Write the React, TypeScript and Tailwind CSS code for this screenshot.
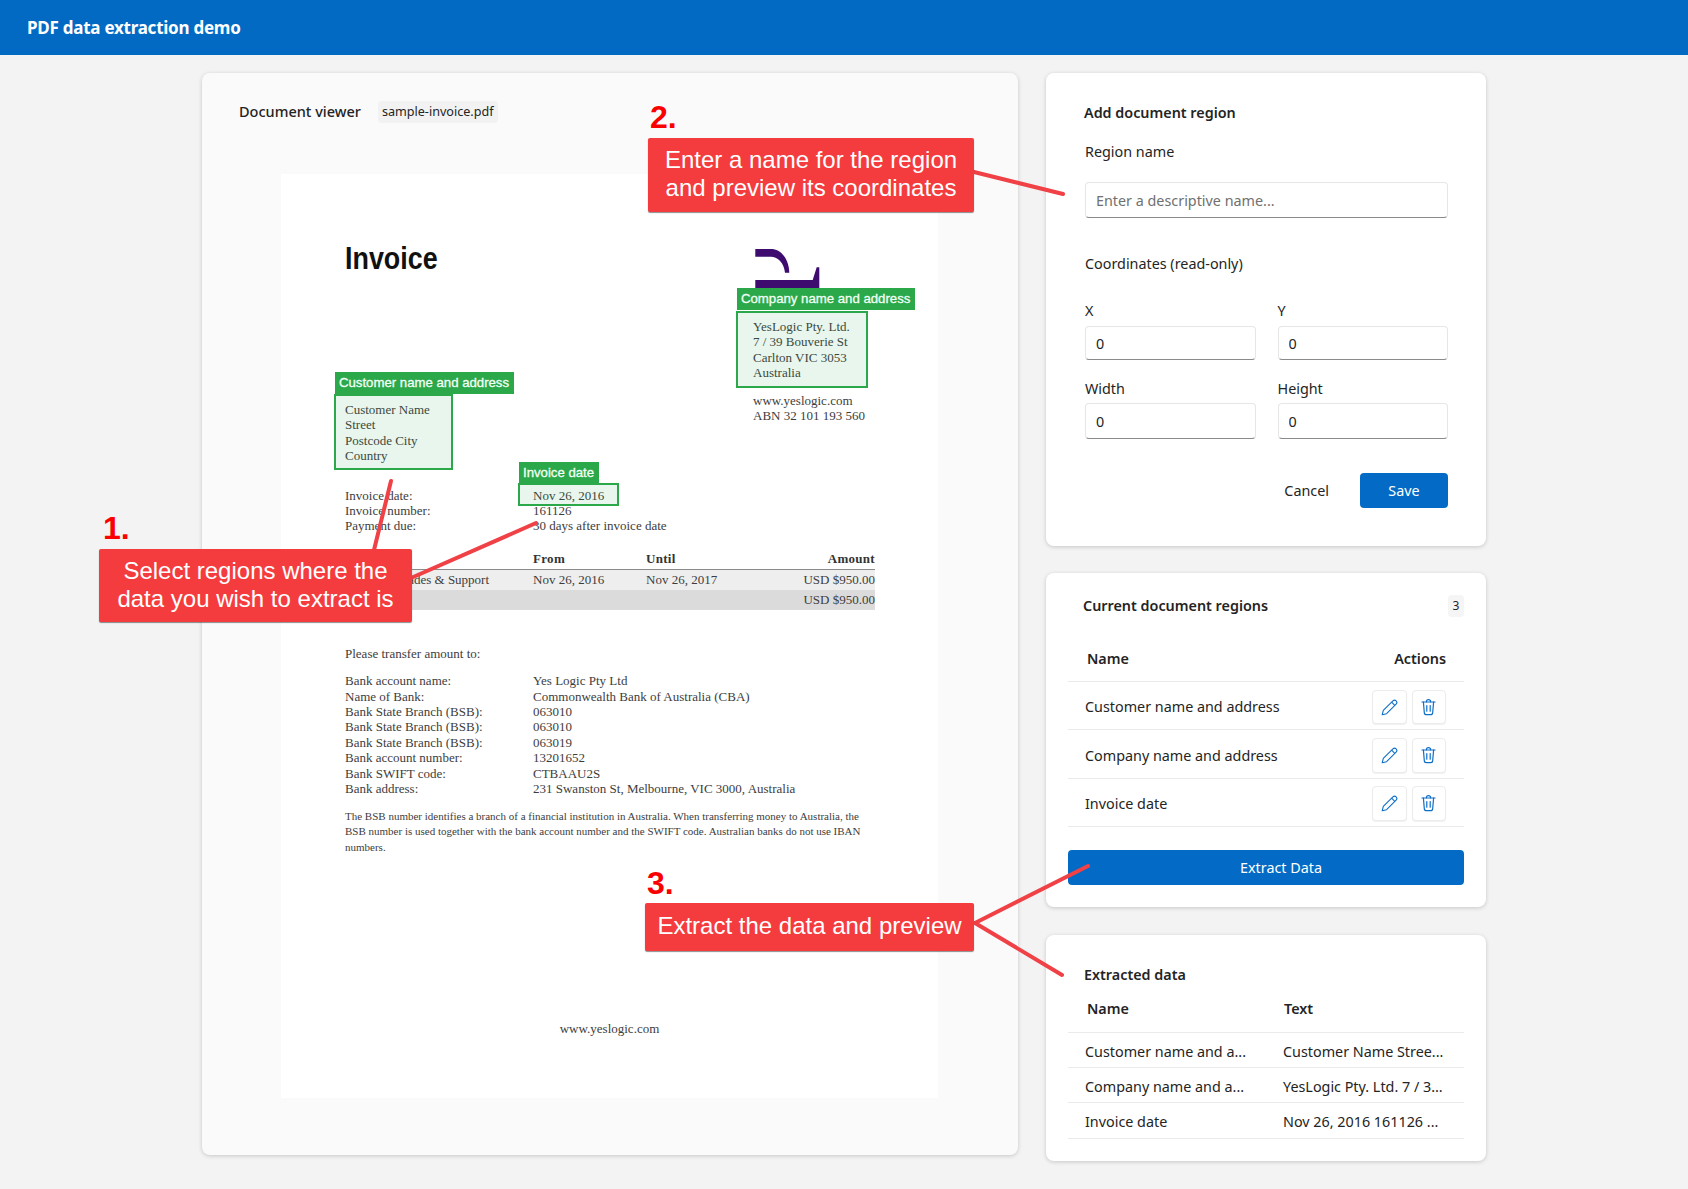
const serif = "font-['Liberation_Serif',serif]";

const bankRows = [
  ['Bank account name:', 'Yes Logic Pty Ltd'],
  ['Name of Bank:', 'Commonwealth Bank of Australia (CBA)'],
  ['Bank State Branch (BSB):', '063010'],
  ['Bank State Branch (BSB):', '063010'],
  ['Bank State Branch (BSB):', '063019'],
  ['Bank account number:', '13201652'],
  ['Bank SWIFT code:', 'CTBAAU2S'],
  ['Bank address:', '231 Swanston St, Melbourne, VIC 3000, Australia'],
];

const regions = ['Customer name and address', 'Company name and address', 'Invoice date'];

const extracted = [
  ['Customer name and a...', 'Customer Name Stree...'],
  ['Company name and a...', 'YesLogic Pty. Ltd. 7 / 3...'],
  ['Invoice date', 'Nov 26, 2016 161126 ...'],
];

function EditIcon() {
  return (
    <svg width="17" height="17" viewBox="0 0 17 17" fill="none" stroke="#0f6fc6" strokeWidth="1.1" strokeLinejoin="round">
      <path d="M1.2 15.8 L2.3 11.4 L11.9 1.9 A2.2 2.2 0 0 1 15.1 5.1 L5.6 14.7 Z" />
      <path d="M10.6 3.2 L13.8 6.4" />
    </svg>
  );
}

function TrashIcon() {
  return (
    <svg width="15" height="17" viewBox="0 0 15 17" fill="none" stroke="#0f6fc6" strokeWidth="1.2" strokeLinecap="round">
      <path d="M5.4 2.8 A2.1 2.1 0 0 1 9.6 2.8" />
      <path d="M1 3 H14" />
      <path d="M2.4 3 L3.3 13.6 A2.3 2.3 0 0 0 5.6 15.7 H9.4 A2.3 2.3 0 0 0 11.7 13.6 L12.6 3" />
      <path d="M5.8 6.6 V12.2 M9.2 6.6 V12.2" />
    </svg>
  );
}

function Region({ label, className, boxClassName }: { label: string; className: string; boxClassName: string }) {
  return (
    <>
      <div className={`absolute h-[22px] bg-[#2aa84a] px-1 text-[13.2px] leading-[22px] whitespace-nowrap text-[#f2fff5] [-webkit-text-stroke:0.3px_#f2fff5] font-['Liberation_Sans',sans-serif] ${className}`}>
        {label}
      </div>
      <div className={`absolute border-2 border-[#2aa84a] bg-[#2aa84a]/10 ${boxClassName}`}></div>
    </>
  );
}

function Field({ label, value, className }: { label: string; value: string; className: string }) {
  return (
    <div>
      <div className="h-5 leading-[19px]">{label}</div>
      <input
        readOnly
        value={value}
        className={`w-full rounded border border-[#e6e6e6] border-b-[#8a8a8a] bg-white px-[10px] outline-none ${className}`}
      />
    </div>
  );
}

function Callout({ num, text, className, numClassName }: { num: string; text: React.ReactNode; className: string; numClassName: string }) {
  return (
    <>
      <div className={`absolute text-[32px] leading-9 font-bold text-[#fa0000] font-['Liberation_Sans',sans-serif] ${numClassName}`}>{num}</div>
      <div className={`absolute flex items-center justify-center rounded-[2px] bg-[#f43c3f] pb-[2px] text-center text-[24px] leading-[28px] text-white shadow-[0_1px_1px_rgba(0,0,0,0.45)] font-['Liberation_Sans',sans-serif] ${className}`}>
        <div>{text}</div>
      </div>
    </>
  );
}

function InvoicePage() {
  return (
    <div className={`relative h-[924px] w-[657px] bg-white pt-[62px] text-[13px] leading-[15.4px] text-[#3d3d3d] ${serif}`}>
      <div className="flex pl-[64px]">
        <div className="w-[408px]">
          <div className="h-11 origin-left scale-x-[0.84] text-[32px] leading-[44px] font-bold text-[#111] font-['Liberation_Sans',sans-serif]">Invoice</div>
          <div className="mt-[122px]">
            <div>Customer Name</div>
            <div>Street</div>
            <div>Postcode City</div>
            <div>Country</div>
          </div>
          <div className="mt-[24px] grid grid-cols-[188px_1fr]">
            <div>Invoice date:</div>
            <div>Nov 26, 2016</div>
            <div>Invoice number:</div>
            <div>161126</div>
            <div>Payment due:</div>
            <div>30 days after invoice date</div>
          </div>
        </div>
        <div>
          <svg className="mt-[13px]" width="67" height="40" viewBox="0 0 67 40" fill="#3d0c6e">
            <path d="M2.3 0 H18 C28 0 36 10 36.3 23.7 H32 C31 13 24 7.7 18 7.7 H2.3 Z" />
            <path d="M2.3 31 H59.7 L63.7 18.3 H66.3 V39.3 H2.3 Z" />
          </svg>
          <div className="mt-[30px]">
            <div>YesLogic Pty. Ltd.</div>
            <div>7 / 39 Bouverie St</div>
            <div>Carlton VIC 3053</div>
            <div>Australia</div>
          </div>
          <div className="mt-3">
            <div>www.yeslogic.com</div>
            <div>ABN 32 101 193 560</div>
          </div>
        </div>
      </div>

      <div className="mt-[17px] ml-[64px] w-[530px]">
        <div className="grid h-[19px] grid-cols-[188px_113px_111px_118px] border-b border-[#8a8a8a] font-bold tracking-[0.3px] text-[#333]">
          <div>Description</div>
          <div>From</div>
          <div>Until</div>
          <div className="text-right">Amount</div>
        </div>
        <div className="grid h-5 grid-cols-[188px_113px_111px_118px] items-center bg-[#eeeeee]">
          <div>Prince Upgrades &amp; Support</div>
          <div>Nov 26, 2016</div>
          <div>Nov 26, 2017</div>
          <div className="text-right">USD $950.00</div>
        </div>
        <div className="grid h-5 grid-cols-[412px_118px] items-center bg-[#dbdbdb]">
          <div></div>
          <div className="text-right">USD $950.00</div>
        </div>
      </div>

      <div className="mt-[36px] ml-[64px]">Please transfer amount to:</div>
      <div className="mt-[12px] ml-[64px] grid grid-cols-[188px_1fr]">
        {bankRows.map(([k, v], i) => (
          <div key={i} className="contents">
            <div>{k}</div>
            <div>{v}</div>
          </div>
        ))}
      </div>
      <div className="mt-[12.5px] ml-[64px] text-[11px]">
        <div>The BSB number identifies a branch of a financial institution in Australia. When transferring money to Australia, the</div>
        <div>BSB number is used together with the bank account number and the SWIFT code. Australian banks do not use IBAN</div>
        <div>numbers.</div>
      </div>
      <div className="mt-[166px] text-center">www.yeslogic.com</div>

      <Region label="Customer name and address" className="top-[198px] left-[54px] w-[179px]" boxClassName="top-[220px] left-[53px] h-[76px] w-[119px]" />
      <Region label="Company name and address" className="top-[114px] left-[456px] w-[178px]" boxClassName="top-[137px] left-[455px] h-[77px] w-[132px]" />
      <Region label="Invoice date" className="top-[288px] left-[238px] w-[80px]" boxClassName="top-[309px] left-[237px] h-[23px] w-[101px]" />
    </div>
  );
}

export default function App() {
  return (
    <div className="relative min-h-screen bg-[#f3f3f3] text-[14.35px] text-[#242424] font-['Noto_Sans',sans-serif]">
      <header className="flex h-[55px] items-center bg-[#036ac4] pl-[27px] text-[17px] font-bold tracking-[-0.25px] text-white">
        PDF data extraction demo
      </header>

      <main className="flex gap-[28px] pt-[18px] pl-[202px]">
        <section className="h-[1082px] w-[816px] rounded-lg bg-[#fafafa] shadow-[0_1px_4px_rgba(0,0,0,0.18)]">
          <div className="flex items-center pt-[28px] pl-[37px]">
            <div className="text-[14.5px] font-medium">Document viewer</div>
            <div className="ml-[17px] flex h-[22px] items-center rounded bg-[#f2f2f2] px-1 text-[12.6px]">sample-invoice.pdf</div>
          </div>
          <div className="mt-[51px] ml-[79px]">
            <InvoicePage />
          </div>
        </section>

        <div className="flex w-[440px] flex-col gap-[27px]">
          <section className="rounded-lg bg-white pt-[30px] pr-[38px] pb-[38px] pl-[39px] shadow-[0_1px_4px_rgba(0,0,0,0.18)]">
            <div className="-ml-px h-5 leading-[19px] font-semibold">Add document region</div>
            <div className="mt-[19px] h-5 leading-[19px]">Region name</div>
            <input
              readOnly
              placeholder="Enter a descriptive name..."
              className="mt-5 h-[36px] w-full rounded border border-[#e6e6e6] border-b-[#8a8a8a] bg-white px-[10px] outline-none placeholder:text-[#707070]"
            />
            <div className="mt-9 h-5 leading-[19px]">Coordinates (read-only)</div>
            <div className="mt-[27px] grid grid-cols-2 gap-x-[22px] gap-y-[19px]">
              <Field label="X" value="0" className="mt-[5px] h-[34px]" />
              <Field label="Y" value="0" className="mt-[5px] h-[34px]" />
              <Field label="Width" value="0" className="mt-1 h-9" />
              <Field label="Height" value="0" className="mt-1 h-9" />
            </div>
            <div className="mt-[34px] flex items-center justify-end">
              <button className="mr-[31px]">Cancel</button>
              <button className="h-[35px] w-[88px] rounded bg-[#036bc6] text-white">Save</button>
            </div>
          </section>

          <section className="rounded-lg bg-white px-[22px] pt-[22px] pb-[22px] shadow-[0_1px_4px_rgba(0,0,0,0.18)]">
            <div className="flex items-center justify-between">
              <div className="pl-[15px] font-semibold">Current document regions</div>
              <div className="flex h-[22px] w-4 items-center justify-center rounded bg-[#f5f5f5] text-[12px]">3</div>
            </div>
            <div className="mt-[20px] flex h-[45px] items-center justify-between border-b border-[#ebebeb] pr-[18px] pl-[19px] font-semibold">
              <div>Name</div>
              <div>Actions</div>
            </div>
            {regions.map((name) => (
              <div key={name} className="flex h-[48.3px] items-center justify-between border-b border-[#ebebeb] pt-[3px] pr-[18px] pl-[17px]">
                <div>{name}</div>
                <div className="flex gap-[5px]">
                  <button className="flex h-[34.5px] w-[34.5px] items-center justify-center rounded border border-[#ececec] bg-white shadow-[0_1px_1px_rgba(0,0,0,0.06)]">
                    <EditIcon />
                  </button>
                  <button className="flex h-[34.5px] w-[34.5px] items-center justify-center rounded border border-[#ececec] bg-white shadow-[0_1px_1px_rgba(0,0,0,0.06)]">
                    <TrashIcon />
                  </button>
                </div>
              </div>
            ))}
            <button className="mt-[23px] h-[35px] w-full rounded bg-[#036bc6] pl-[30px] text-white">Extract Data</button>
          </section>

          <section className="mt-px rounded-lg bg-white px-[22px] pt-[30px] pb-[22px] shadow-[0_1px_4px_rgba(0,0,0,0.18)]">
            <div className="pl-[16px] leading-5 font-semibold">Extracted data</div>
            <div className="grid h-[48px] grid-cols-[197px_1fr] items-center border-b border-[#ebebeb] pl-[19px] font-semibold">
              <div>Name</div>
              <div>Text</div>
            </div>
            {extracted.map(([name, text]) => (
              <div key={name} className="grid h-[35.3px] grid-cols-[198px_1fr] items-center border-b border-[#ebebeb] pt-[3px] pl-[17px]">
                <div>{name}</div>
                <div>{text}</div>
              </div>
            ))}
          </section>
        </div>
      </main>

      <svg className="pointer-events-none absolute top-0 left-0" width="1688" height="1189" fill="none" stroke="#ef4146" strokeWidth="4" strokeLinecap="round">
        <path d="M391 481 L374 550" />
        <path d="M536 523 L411 578" />
        <path d="M974 172 L1063 194" />
        <path d="M975 923 L1088 866" />
        <path d="M975 923 L1062 975" />
      </svg>

      <Callout
        num="1."
        numClassName="top-[510px] left-[103px]"
        className="top-[549px] left-[99px] h-[73px] w-[313px]"
        text={<>Select regions where the<br />data you wish to extract is</>}
      />
      <Callout
        num="2."
        numClassName="top-[99px] left-[650px]"
        className="top-[138px] left-[648px] h-[74px] w-[326px]"
        text={<>Enter a name for the region<br />and preview its coordinates</>}
      />
      <Callout
        num="3."
        numClassName="top-[865px] left-[647px]"
        className="top-[903px] left-[645px] h-[48px] w-[329px]"
        text="Extract the data and preview"
      />
    </div>
  );
}
